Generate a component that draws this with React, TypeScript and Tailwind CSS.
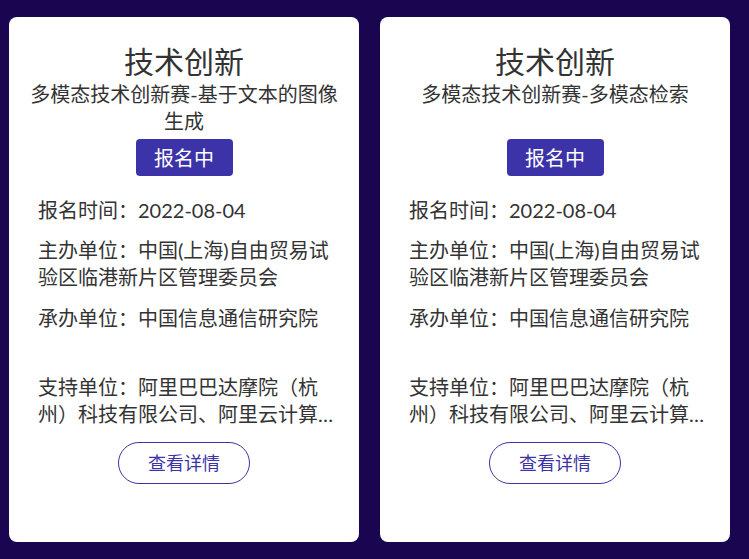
import React from 'react';

interface Contest {
  title: string;
  subtitle: string;
  date: string;
  host: string;
  organizer: string;
  support: string;
}

const contests: Contest[] = [
  {
    title: '技术创新',
    subtitle: '多模态技术创新赛-基于文本的图像生成',
    date: '2022-08-04',
    host: '中国(上海)自由贸易试验区临港新片区管理委员会',
    organizer: '中国信息通信研究院',
    support: '阿里巴巴达摩院（杭州）科技有限公司、阿里云计算有限公司、上海人工智能研究院',
  },
  {
    title: '技术创新',
    subtitle: '多模态技术创新赛-多模态检索',
    date: '2022-08-04',
    host: '中国(上海)自由贸易试验区临港新片区管理委员会',
    organizer: '中国信息通信研究院',
    support: '阿里巴巴达摩院（杭州）科技有限公司、阿里云计算有限公司、上海人工智能研究院',
  },
];

const ContestCard: React.FC<{ c: Contest }> = ({ c }) => {
  return (
    <div className="w-[350px] h-[525px] shrink-0 bg-white rounded-[8px] flex flex-col items-center pt-[24px] text-[#333333]">
      <h2 className="text-[30px] leading-[40px] font-normal">{c.title}</h2>
      <p className="h-[54px] w-full px-[20px] text-center text-[20px] leading-[27px]">{c.subtitle}</p>
      <span className="mt-[4px] w-[97px] h-[37px] flex items-center justify-center bg-[#3d33a8] rounded-[4px] text-white text-[20px]">
        报名中
      </span>

      <div className="self-stretch pl-[29px] pr-[25px] mt-[21px] text-[20px] leading-[27px]">
        <p className="h-[27px]">报名时间：{c.date}</p>
        <p className="mt-[13px] h-[54px] line-clamp-2">主办单位：{c.host}</p>
        <p className="mt-[14px] h-[54px] line-clamp-2">承办单位：{c.organizer}</p>
        <p className="mt-[15px] h-[54px] line-clamp-2">支持单位：{c.support}</p>
      </div>

      <button className="mt-[14px] w-[132px] h-[42px] border border-[#3d33a8] rounded-full text-[18px] text-[#3d33a8] bg-white">
        查看详情
      </button>
    </div>
  );
};

const App: React.FC = () => {
  return (
    <div
      className="min-h-screen bg-[#1a0551] flex gap-[21px] pl-[9px] pt-[17px]"
      style={{ fontFamily: 'Lato, "Noto Sans CJK SC", sans-serif' }}
    >
      {contests.map((c, i) => (
        <ContestCard key={i} c={c} />
      ))}
    </div>
  );
};

export default App;
